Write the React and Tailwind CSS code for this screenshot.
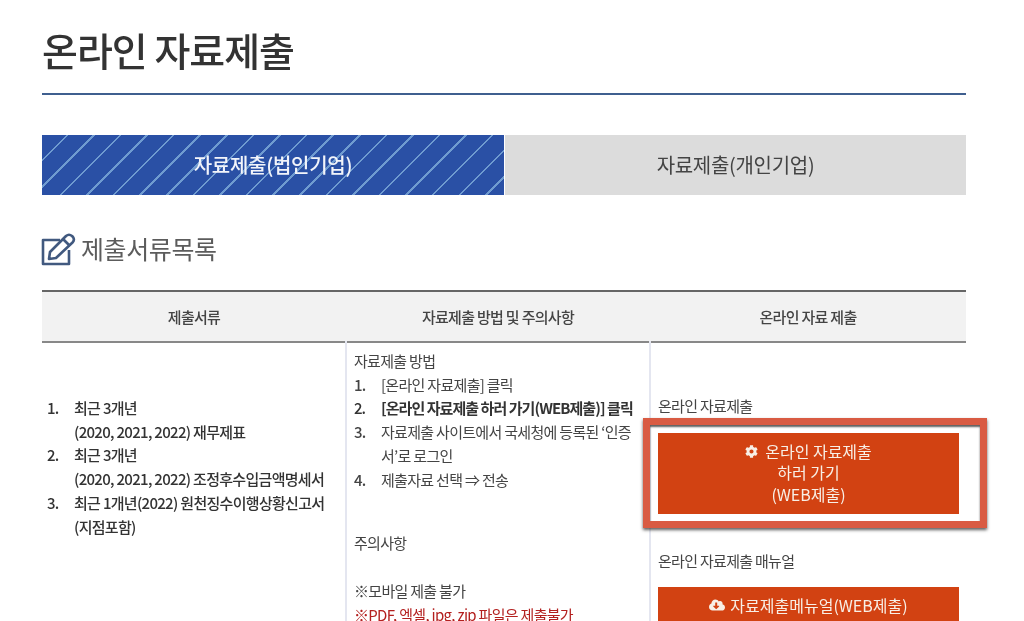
import { FaCog, FaCloudDownloadAlt } from "react-icons/fa";

const docs = [
  ["최근 3개년", "(2020, 2021, 2022) 재무제표"],
  ["최근 3개년", "(2020, 2021, 2022) 조정후수입금액명세서"],
  ["최근 1개년(2022) 원천징수이행상황신고서", "(지점포함)"],
];

const steps = [
  { text: "[온라인 자료제출] 클릭" },
  { text: "[온라인 자료제출 하러 가기(WEB제출)] 클릭", bold: true },
  { text: "자료제출 사이트에서 국세청에 등록된 ‘인증서’로 로그인" },
  { text: "제출자료 선택 ⇒ 전송" },
];

function EditIcon() {
  return (
    <svg width="35" height="34" viewBox="0 0 35 34" fill="none" stroke="#41597f" strokeWidth="2.6" strokeLinejoin="round" className="shrink-0">
      <path d="M19 8H2V32H28V18" />
      <path d="M8 27L9 20L25 4Q28 1.500 31 4L32 5Q34 8 31.500 10.500L15 26Z" />
      <path d="M22 7L29 14" />
    </svg>
  );
}

function NumberedRow({ n, bold, children }) {
  return (
    <li className={`flex ${bold ? "font-semibold tracking-[-0.95px] whitespace-nowrap text-[#333]" : ""}`}>
      <span className="w-[27px] shrink-0 font-medium">{n}.</span>
      <span>{children}</span>
    </li>
  );
}

export default function App() {
  return (
    <div className="relative h-[621px] overflow-hidden bg-white blur-[0.6px] font-['Noto_Sans_CJK_KR','Noto_Sans',sans-serif]">
      <div className="ml-[42px] w-[924px]">
        <div className="h-[95px] border-b-2 border-[#3f5f8f] pt-[22px]">
          <h1 className="text-[39px] leading-[54px] font-medium tracking-[-1px] text-[#333]">온라인 자료제출</h1>
        </div>

        <div className="mt-[40px] flex h-[60px] gap-px text-[20px] tracking-[-0.3px]">
          <div className="flex w-[462px] items-center justify-center bg-[#2a50a5] bg-[repeating-linear-gradient(135deg,#2a50a5_0px,#2a50a5_17px,#6f9bd0_17px,#6f9bd0_18.8px)] font-medium text-[#f2f4fa]">
            자료제출(법인기업)
          </div>
          <div className="flex flex-1 items-center justify-center bg-[#dcdcdc] text-[#444]">자료제출(개인기업)</div>
        </div>

        <div className="mt-[35px] -ml-px flex h-[38px] items-center gap-[5px]">
          <EditIcon />
          <h2 className="text-[25px] tracking-[-0.4px] text-[#5c5c5c]">제출서류목록</h2>
        </div>

        <table className="mt-[22px] w-full table-fixed border-collapse text-[15px] leading-[23.7px] tracking-[-0.7px] text-[#444]">
          <thead>
            <tr className="h-[51px] border-t-2 border-b-2 border-t-[#666] border-b-[#888] bg-[#f2f2f2]">
              <th className="w-[304px] font-medium">제출서류</th>
              <th className="w-[304px] font-medium">자료제출 방법 및 주의사항</th>
              <th className="font-medium">온라인 자료 제출</th>
            </tr>
          </thead>
          <tbody>
            <tr>
              <td className="border-r-2 border-[#e4e6f0] pt-[53px] pl-[5px] align-top">
                <ol className="font-medium text-[#333]">
                  {docs.map((lines, i) => (
                    <li key={i} className="flex">
                      <span className="w-[27px] shrink-0">{i + 1}.</span>
                      <span>
                        {lines[0]}
                        <br />
                        {lines[1]}
                      </span>
                    </li>
                  ))}
                </ol>
              </td>
              <td className="border-r-2 border-[#e4e6f0] pt-[6px] pr-[10px] pl-[7px] align-top">
                <p>자료제출 방법</p>
                <ol>
                  {steps.map((s, i) => (
                    <NumberedRow key={i} n={i + 1} bold={s.bold}>
                      {s.text}
                    </NumberedRow>
                  ))}
                </ol>
                <p className="mt-[40px]">주의사항</p>
                <p className="mt-[24px]">※모바일 제출 불가</p>
                <p className="text-[#b3201f]">※PDF, 엑셀, jpg, zip 파일은 제출불가</p>
              </td>
              <td className="px-[7px] pt-[51px] align-top">
                <p>온라인 자료제출</p>
                <a className="mt-[15px] flex h-[81px] w-[301px] flex-col items-center justify-center bg-[#d24212] text-[16px] leading-[21.5px] tracking-[0px] text-[#f8efe6]">
                  <span className="flex items-center gap-[7px]">
                    <FaCog size={13} />
                    온라인 자료제출
                  </span>
                  <span>하러 가기</span>
                  <span>(WEB제출)</span>
                </a>
                <p className="mt-[35px]">온라인 자료제출 매뉴얼</p>
                <a className="mt-[15px] flex h-[36px] w-[301px] items-center justify-center gap-[5px] bg-[#d24212] text-[16px] tracking-[0px] text-[#f8efe6]">
                  <FaCloudDownloadAlt size={16} />
                  자료제출메뉴얼(WEB제출)
                </a>
              </td>
            </tr>
          </tbody>
        </table>
      </div>

      <div className="absolute top-[418px] left-[643px] h-[110px] w-[344px] border-[7px] border-[#d95b43] shadow-[0_2px_3px_rgba(40,40,40,0.75),inset_0_2px_2px_rgba(40,40,40,0.75)]" />
    </div>
  );
}
